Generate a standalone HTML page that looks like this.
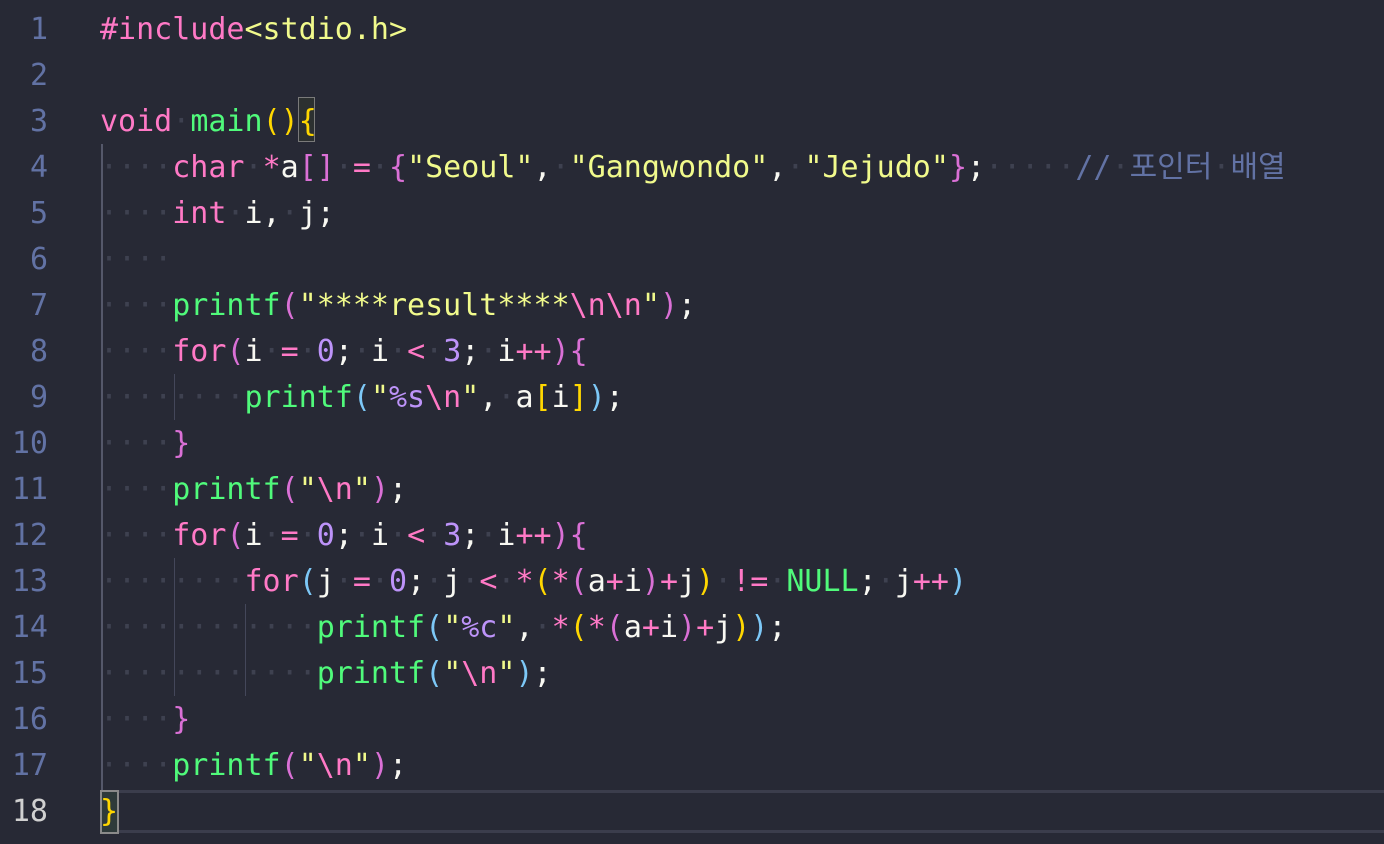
<!DOCTYPE html>
<html><head><meta charset="utf-8"><style>
html,body{margin:0;padding:0;background:#272935;width:1384px;height:844px;overflow:hidden}
.g{position:absolute;left:0;top:7px;width:48px;text-align:right;font:30px/46px "DejaVu Sans Mono",monospace;color:#6272a4}
.g div{height:46px}
.code{position:absolute;left:100px;top:7px;font:30px/46px "DejaVu Sans Mono","Noto Sans CJK KR",monospace;color:#f8f8f2}
.code div{height:46px;white-space:pre}
.k{color:#ff79c6}.f{color:#50fa7b}.s{color:#f1fa8c}.n{color:#bd93f9}.o{color:#da70d6}.y{color:#ffd700}.b{color:#7dc8f7}
.c{color:#6272a4}
.w{color:#3e4150}
.v{position:absolute;width:1px;background:#44475a}
.cl{position:absolute;left:118px;right:0;height:3px;background:#3b3d4c}
</style></head><body>
<div class="cl" style="top:790px"></div>
<div class="cl" style="top:830px"></div>
<div style="position:absolute;left:100px;top:790px;width:15px;height:40px;border:2px solid #8a8a8a;background:#2e3a3a"></div>
<div style="position:absolute;left:298px;top:97px;width:15px;height:43px;border:1px solid #7a7a7a;background:#2c3030"></div>
<div class="v" style="left:101px;top:144px;height:646px;width:2px;background:#55586a"></div>
<div class="v" style="left:174px;top:374px;height:46px"></div>
<div class="v" style="left:174px;top:558px;height:138px"></div>
<div class="v" style="left:245px;top:604px;height:92px"></div>
<div class="g"><div>1</div><div>2</div><div>3</div><div>4</div><div>5</div><div>6</div><div>7</div><div>8</div><div>9</div><div>10</div><div>11</div><div>12</div><div>13</div><div>14</div><div>15</div><div>16</div><div>17</div><div style="color:#d0d0d0">18</div></div>
<div class="code"><div><span class="k">#include</span><span class="s">&lt;stdio.h&gt;</span></div><div></div><div><span class="k">void</span><span class="w">·</span><span class="f">main</span><span class="y">()</span><span class="y">{</span></div><div><span class="w">····</span><span class="k">char</span><span class="w">·</span><span class="k">*</span>a<span class="o">[]</span><span class="w">·</span><span class="k">=</span><span class="w">·</span><span class="o">{</span><span class="s">"Seoul"</span>,<span class="w">·</span><span class="s">"Gangwondo"</span>,<span class="w">·</span><span class="s">"Jejudo"</span><span class="o">}</span>;<span class="w">·····</span><span class="c">//<span class="w">·</span>포인터<span class="w">·</span>배열</span></div><div><span class="w">····</span><span class="k">int</span><span class="w">·</span>i,<span class="w">·</span>j;</div><div><span class="w">····</span></div><div><span class="w">····</span><span class="f">printf</span><span class="o">(</span><span class="s">"****result****</span><span class="k">\n\n</span><span class="s">"</span><span class="o">)</span>;</div><div><span class="w">····</span><span class="k">for</span><span class="o">(</span>i<span class="w">·</span><span class="k">=</span><span class="w">·</span><span class="n">0</span>;<span class="w">·</span>i<span class="w">·</span><span class="k">&lt;</span><span class="w">·</span><span class="n">3</span>;<span class="w">·</span>i<span class="k">++</span><span class="o">)</span><span class="o">{</span></div><div><span class="w">········</span><span class="f">printf</span><span class="b">(</span><span class="s">"</span><span class="n">%s</span><span class="k">\n</span><span class="s">"</span>,<span class="w">·</span>a<span class="y">[</span>i<span class="y">]</span><span class="b">)</span>;</div><div><span class="w">····</span><span class="o">}</span></div><div><span class="w">····</span><span class="f">printf</span><span class="o">(</span><span class="s">"</span><span class="k">\n</span><span class="s">"</span><span class="o">)</span>;</div><div><span class="w">····</span><span class="k">for</span><span class="o">(</span>i<span class="w">·</span><span class="k">=</span><span class="w">·</span><span class="n">0</span>;<span class="w">·</span>i<span class="w">·</span><span class="k">&lt;</span><span class="w">·</span><span class="n">3</span>;<span class="w">·</span>i<span class="k">++</span><span class="o">)</span><span class="o">{</span></div><div><span class="w">········</span><span class="k">for</span><span class="b">(</span>j<span class="w">·</span><span class="k">=</span><span class="w">·</span><span class="n">0</span>;<span class="w">·</span>j<span class="w">·</span><span class="k">&lt;</span><span class="w">·</span><span class="k">*</span><span class="y">(</span><span class="k">*</span><span class="o">(</span>a<span class="k">+</span>i<span class="o">)</span><span class="k">+</span>j<span class="y">)</span><span class="w">·</span><span class="k">!=</span><span class="w">·</span><span class="f">NULL</span>;<span class="w">·</span>j<span class="k">++</span><span class="b">)</span></div><div><span class="w">············</span><span class="f">printf</span><span class="b">(</span><span class="s">"</span><span class="n">%c</span><span class="s">"</span>,<span class="w">·</span><span class="k">*</span><span class="y">(</span><span class="k">*</span><span class="o">(</span>a<span class="k">+</span>i<span class="o">)</span><span class="k">+</span>j<span class="y">)</span><span class="b">)</span>;</div><div><span class="w">············</span><span class="f">printf</span><span class="b">(</span><span class="s">"</span><span class="k">\n</span><span class="s">"</span><span class="b">)</span>;</div><div><span class="w">····</span><span class="o">}</span></div><div><span class="w">····</span><span class="f">printf</span><span class="o">(</span><span class="s">"</span><span class="k">\n</span><span class="s">"</span><span class="o">)</span>;</div><div><span class="y">}</span></div></div>
</body></html>
